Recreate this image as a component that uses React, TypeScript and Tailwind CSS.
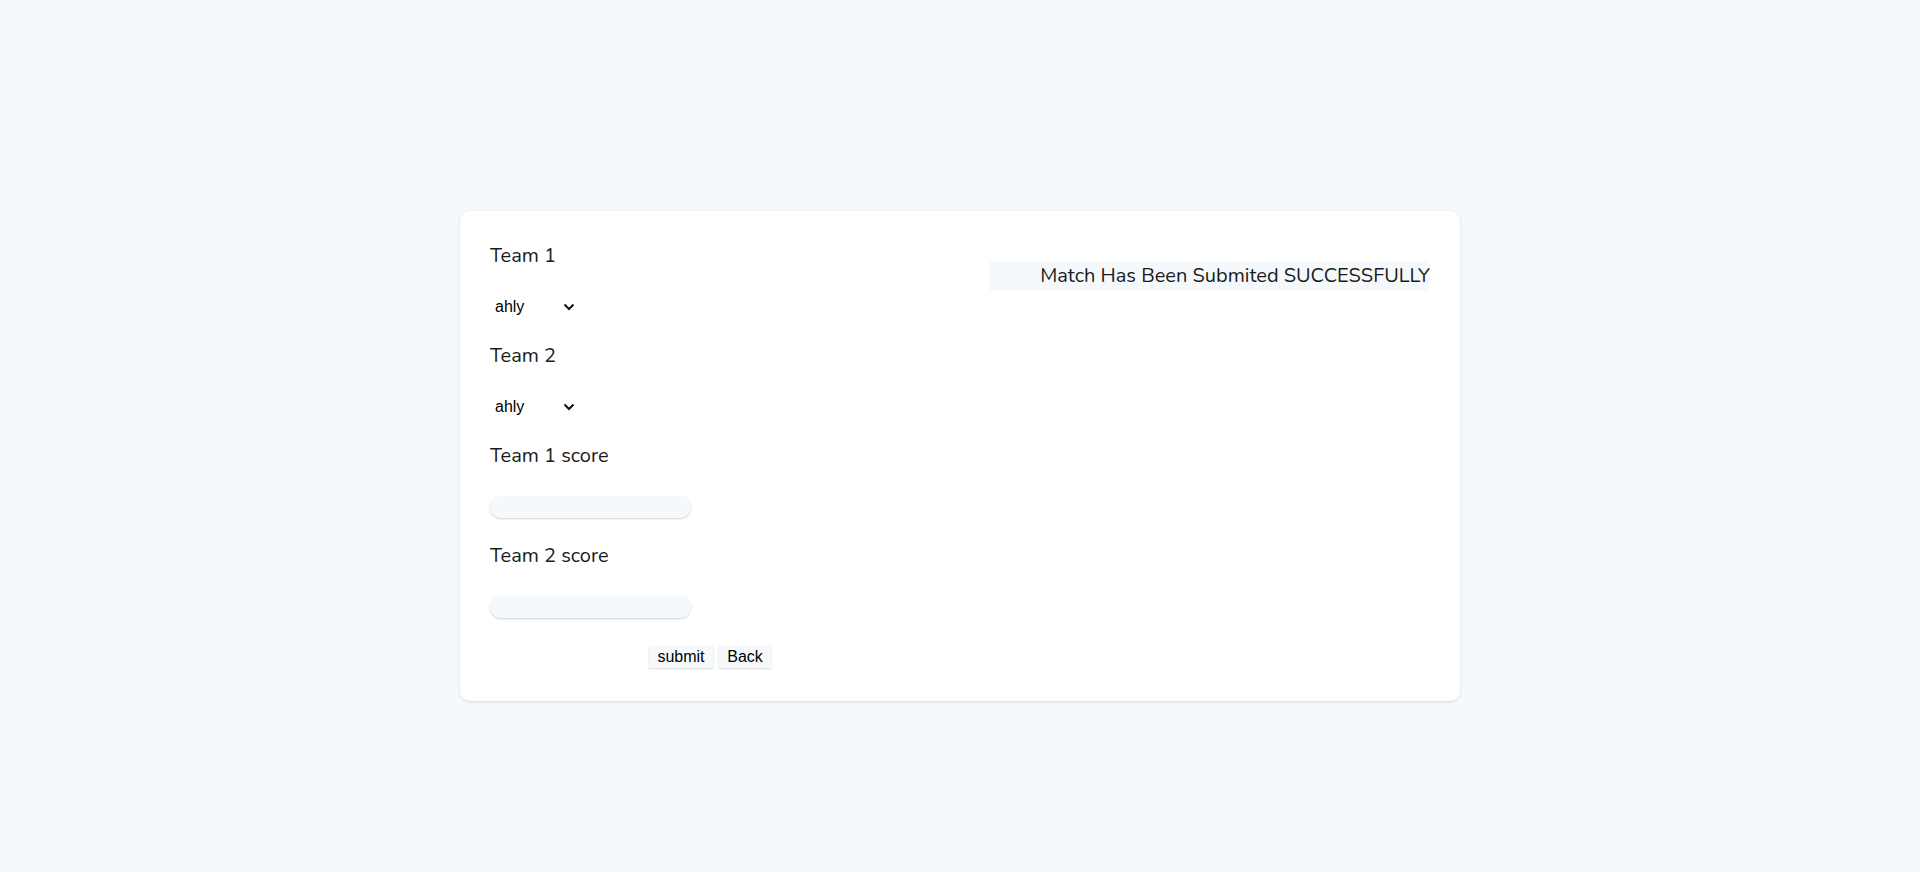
const teams = ['ahly', 'zamalek', 'pyramids', 'masry']

function TeamSelect() {
  return (
    <div className="relative w-[90px] h-6">
      <select
        defaultValue="ahly"
        className="appearance-none bg-transparent w-full h-6 pl-[5px] text-[16px] leading-6 text-black outline-none"
        style={{ fontFamily: '"Liberation Sans", Arial, sans-serif' }}
      >
        {teams.map((t) => (
          <option key={t} value={t}>
            {t}
          </option>
        ))}
      </select>
      <svg
        className="absolute left-[73px] top-[8px] pointer-events-none"
        width="12"
        height="8"
        viewBox="0 0 12 8"
        fill="none"
      >
        <path d="M1.5 1.5 6 6l4.5-4.5" stroke="#111" strokeWidth="2" />
      </svg>
    </div>
  )
}

function Label({ children }: { children: string }) {
  return <p className="text-[20px] leading-[30px] text-[#1b1b1b]">{children}</p>
}

export default function App() {
  return (
    <div
      className="min-h-screen bg-[#f5f9fc] flex justify-center pt-[211px]"
      style={{ fontFamily: 'Nunito, Lato, "Noto Sans", sans-serif' }}
    >
      <div className="w-[1000px] h-[490px] bg-white rounded-[10px] shadow-[0_1px_3px_rgba(0,0,0,0.12)] flex pt-[30px] px-[30px]">
        <form className="w-[500px] flex flex-col" onSubmit={(e) => e.preventDefault()}>
          <Label>Team 1</Label>
          <div className="mt-[24px]">
            <TeamSelect />
          </div>
          <div className="mt-[22px]">
            <Label>Team 2</Label>
          </div>
          <div className="mt-[24px]">
            <TeamSelect />
          </div>
          <div className="mt-[22px]">
            <Label>Team 1 score</Label>
          </div>
          <input
            type="number"
            className="mt-[25px] w-[201px] h-[22px] rounded-[11px] bg-[#f5f9fc] shadow-[0_1px_2px_rgba(0,0,0,0.18)] outline-none px-3"
          />
          <div className="mt-[23px]">
            <Label>Team 2 score</Label>
          </div>
          <input
            type="number"
            className="mt-[25px] w-[201px] h-[22px] rounded-[11px] bg-[#f5f9fc] shadow-[0_1px_2px_rgba(0,0,0,0.18)] outline-none px-3"
          />
          <div
            className="mt-[28px] ml-[159px] flex gap-[6px] text-[16px] text-black"
            style={{ fontFamily: '"Liberation Sans", Arial, sans-serif' }}
          >
            <button type="submit" className="h-[22px] w-[64px] bg-[#f5f9fc] shadow-[0_1px_2px_rgba(0,0,0,0.15)] leading-[22px]">
              submit
            </button>
            <button type="button" className="h-[22px] w-[52px] bg-[#f5f9fc] shadow-[0_1px_2px_rgba(0,0,0,0.15)] leading-[22px]">
              Back
            </button>
          </div>
        </form>
        <div className="w-[440px] mt-[20px]">
          <div className="h-[30px] bg-[#f5f9fc] text-right text-[20px] leading-[30px] text-[#1b1b1b]">
            Match Has Been Submited SUCCESSFULLY
          </div>
        </div>
      </div>
    </div>
  )
}
